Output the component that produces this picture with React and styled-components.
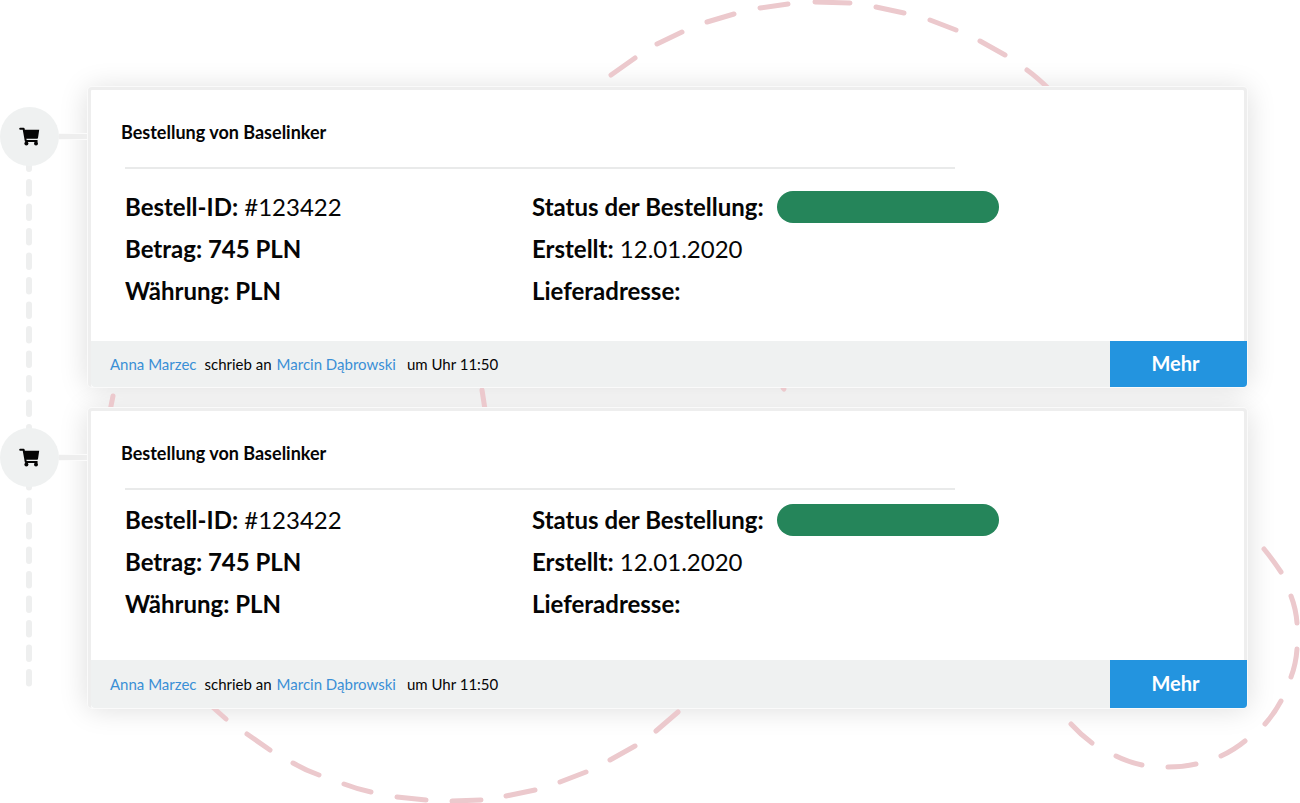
import React from 'react'
import styled, { createGlobalStyle } from 'styled-components'

const GlobalStyle = createGlobalStyle`
    * {
        box-sizing: border-box;
    }

    body {
        margin: 0;
        background: #fff;
        color: #050505;
        font-family: Lato, "Open Sans", sans-serif;
    }
`

const Page = styled.main`
    position: relative;
    isolation: isolate;
    min-height: 100vh;
    padding: 87px 53px 95px 0;
    overflow: hidden;
`

const Background = styled.svg`
    position: absolute;
    top: 0;
    left: 0;
    width: 100%;
    z-index: -1;
    fill: none;
    stroke: #ecc9cd;
    stroke-width: 5;
    stroke-linecap: round;
`

const Track = styled.svg`
    position: absolute;
    top: 136px;
    left: 26px;
    width: 6px;
    height: 553px;
    z-index: -1;
    stroke: #eeefef;
    stroke-width: 6;
    stroke-linecap: round;
`

const Timeline = styled.ol`
    display: flex;
    flex-direction: column;
    gap: 21px;
    margin: 0;
    padding: 0;
    list-style: none;
`

const Entry = styled.li`
    display: flex;
    align-items: flex-start;
`

const Marker = styled.span`
    display: flex;
    align-items: center;
    justify-content: center;
    flex: none;
    width: 59px;
    height: 59px;
    margin-top: 20px;
    border-radius: 50%;
    background: #eff1f1;
`

const Connector = styled.span`
    flex: none;
    width: 29px;
    height: 5px;
    margin-top: 47px;
    background: #eeeeee;
    box-shadow: 0 1px 0 #fbfbfb, 0 -1px 0 #fbfbfb;
`

const Card = styled.article`
    position: relative;
    flex: 1;
    min-width: 0;
    border: 3px solid #eeeeee;
    border-bottom: 0;
    border-radius: 4px;
    background: #fff;
    box-shadow: 0 0 0 1px #fafafa;

    &::before {
        content: '';
        position: absolute;
        inset: 0 -3px;
        z-index: -2;
        border-radius: 8px;
        box-shadow: 0 0 28px 2px rgba(0, 0, 0, 0.13);
    }
`

const Title = styled.h2`
    margin: 0;
    padding: 30px 30px 23px;
    font-size: 18px;
    font-weight: 700;
    line-height: 24px;
`

const Divider = styled.hr`
    width: 72%;
    height: 2px;
    margin: 0 34px;
    border: 0;
    background: #e9eaea;
`

const Details = styled.div`
    display: grid;
    grid-template-columns: 407px 1fr;
    padding: ${props => props.$compact ? '9px 34px 35px' : '17px 34px 29px'};
    font-size: 24px;
    line-height: 42px;
`

const Row = styled.div`
    display: flex;
    align-items: center;
    gap: 13px;
    height: 42px;
    white-space: nowrap;
`

const Label = styled.b`
    font-weight: 700;
`

const StatusPill = styled.span`
    width: 222px;
    height: 32px;
    border-radius: 16px;
    background: #25855a;
`

const Footer = styled.footer`
    display: flex;
    align-items: center;
    justify-content: space-between;
    height: ${props => props.$compact ? '48px' : '46px'};
    margin-right: -3px;
    padding-left: 19px;
    border-radius: 0 0 4px 4px;
    background: #eff1f1;
`

const Meta = styled.p`
    display: flex;
    margin: 0;
    font-size: 15px;
    line-height: 20px;
`

const Person = styled.a`
    margin-right: ${props => props.$wide ? '11px' : '8px'};
    color: #3a8fd6;
    text-decoration: none;
`

const Action = styled.span`
    margin-right: 5px;
`

const MoreButton = styled.button`
    align-self: stretch;
    width: 137px;
    padding: 0 6px 2px 0;
    border: 0;
    border-radius: 0 0 4px 0;
    background: #2394df;
    color: #fff;
    font-family: inherit;
    font-size: 20px;
    font-weight: 700;
    cursor: pointer;
`

const orders = [
    { key: 1, id: '#123422', amount: '745 PLN', currency: 'PLN', created: '12.01.2020', compact: false },
    { key: 2, id: '#123422', amount: '745 PLN', currency: 'PLN', created: '12.01.2020', compact: true },
]

const topArc = 'M611 75L635 58M657 44L682 32M707 22L734 14M760 8L788 4M815 2L850 3M876 7L904 13M930 20L956 30M980 41L1005 55M1027 70Q1038 78 1050 90'
const leftArc = 'M113 396L109 416M482 390L486 416M208 703L226 719M247 734L270 750M293 763Q305 770 319 775M344 784Q357 789 371 792M397 797L426 800M452 801L481 800M506 796L535 790M560 782L586 772M610 760L635 746M656 731L678 712'
const rightArc = 'M1264 549Q1273 560 1281 572M1291 596Q1296 609 1297 623M1297 649Q1296 664 1291 677M1281 701Q1274 714 1265 724M1245 741Q1234 750 1221 756M1196 764Q1183 767 1168 767M1142 765Q1128 762 1116 756M1092 743Q1081 735 1071 724'

const CartIcon = () => (
    <svg width="21" height="19" viewBox="0 0 21 19" aria-hidden="true">
        <path d="M1.2 1.8H4.6L6.8 14H17.8" fill="none" stroke="#050505" strokeWidth="2" strokeLinecap="round" strokeLinejoin="round" />
        <path d="M4.6 2.8H20.2L19 11Q18.9 11.8 18 11.8H6.4Z" fill="#050505" />
        <circle cx="7.4" cy="16.6" r="2" fill="#050505" />
        <circle cx="17" cy="16.6" r="2" fill="#050505" />
    </svg>
)

const OrderCard = ({ order }) => (
    <Card>
        <Title>Bestellung von Baselinker</Title>
        <Divider />
        <Details $compact={order.compact}>
            <div>
                <Row><span><Label>Bestell-ID:</Label> {order.id}</span></Row>
                <Row><Label>Betrag: {order.amount}</Label></Row>
                <Row><Label>Währung: {order.currency}</Label></Row>
            </div>
            <div>
                <Row><Label>Status der Bestellung:</Label><StatusPill /></Row>
                <Row><span><Label>Erstellt:</Label> {order.created}</span></Row>
                <Row><Label>Lieferadresse:</Label></Row>
            </div>
        </Details>
        <Footer $compact={order.compact}>
            <Meta>
                <Person href="#anna">Anna Marzec</Person>
                <Action>schrieb an</Action>
                <Person $wide href="#marcin">Marcin Dąbrowski</Person>
                <span>um Uhr 11:50</span>
            </Meta>
            <MoreButton type="button">Mehr</MoreButton>
        </Footer>
    </Card>
)

const App = () => (
    <>
        <GlobalStyle />
        <Page>
            <Background viewBox="0 0 1300 803" aria-hidden="true">
                <path d={topArc} />
                <path d={leftArc} />
                <path d={rightArc} />
                <path d="M783 388L784 389" />
            </Background>
            <Track viewBox="0 0 6 553" aria-hidden="true">
                <line x1="3" y1="21.5" x2="3" y2="550" strokeDasharray="11.5 13" />
            </Track>
            <Timeline>
                {orders.map(order => (
                    <Entry key={order.key}>
                        <Marker><CartIcon /></Marker>
                        <Connector />
                        <OrderCard order={order} />
                    </Entry>
                ))}
            </Timeline>
        </Page>
    </>
)

export default App
